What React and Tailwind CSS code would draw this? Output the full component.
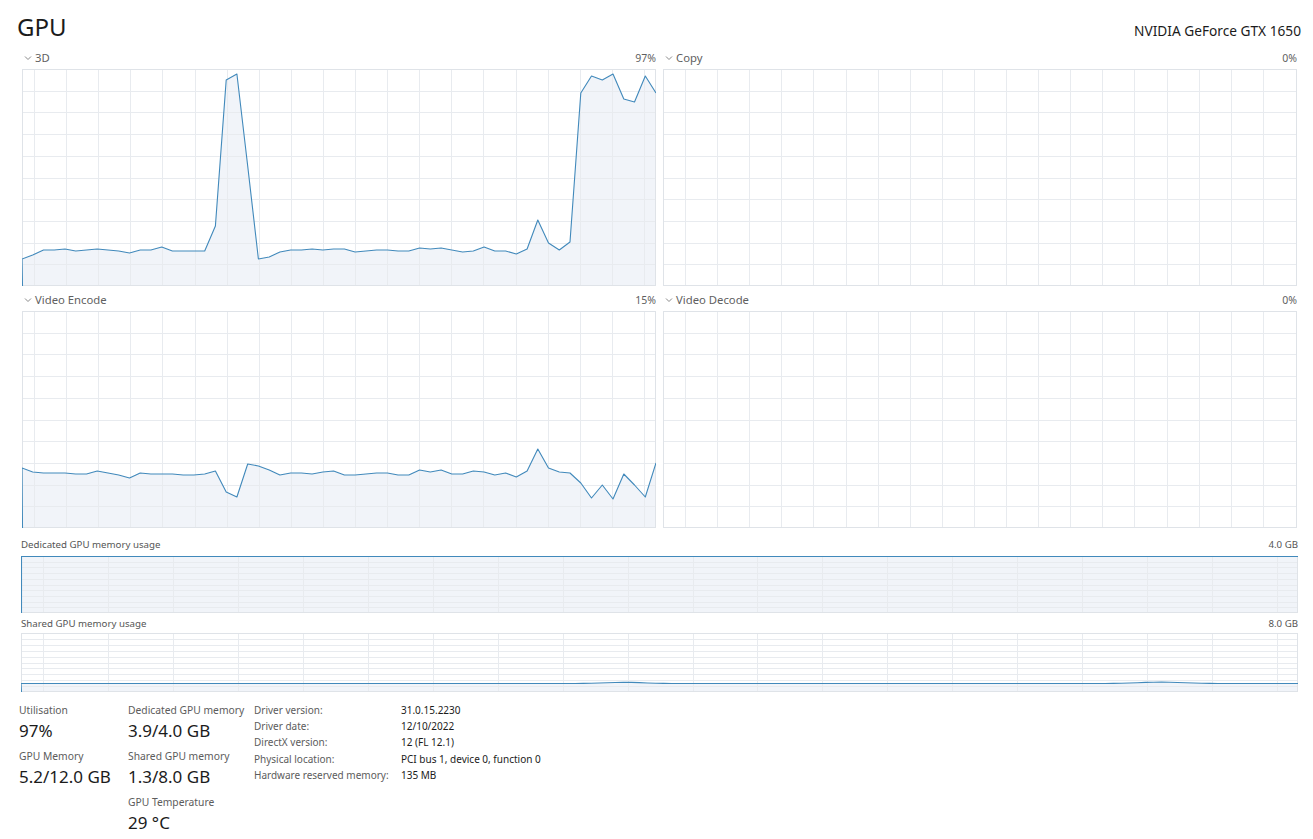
import React from 'react';

// sampled from the reference: y offsets (px) inside a 634x217 graph, 60 samples
const load3d = [
  190, 186, 181, 181, 180, 182, 181, 180, 181, 182,
  184, 181, 181, 178, 182, 182, 182, 182, 157, 11,
  5, 97, 190, 188, 183, 181, 181, 180, 181, 180,
  180, 183, 182, 181, 181, 182, 182, 179, 180, 179,
  181, 183, 182, 178, 182, 182, 185, 180, 151, 174,
  181, 173, 24, 7, 11, 5, 30, 33, 7, 24,
];

const loadEncode = [
  157, 161, 162, 162, 162, 163, 163, 160, 162, 164,
  167, 162, 163, 163, 163, 164, 164, 163, 160, 181,
  186, 153, 155, 159, 164, 162, 162, 163, 161, 160,
  164, 164, 163, 162, 162, 164, 164, 159, 161, 159,
  163, 163, 160, 161, 164, 162, 166, 160, 138, 157,
  161, 162, 172, 187, 174, 188, 163, 174, 186, 152,
];

const LINE = '#4189bb';
const FILL = '#f1f4f9';
const GRID = '#e8ebef';
const BORDER = '#dfe3e8';

const range = (n) => Array.from({ length: n }, (_, i) => i);

function Graph({ w, h, colStart, colStep, cols, rows, points, full }) {
  const step = w / (points ? points.length - 1 : 1);
  let line = '';
  let area = '';
  if (points) {
    const pts = points.map((y, i) => `${(i * step).toFixed(1)},${y}`);
    line = `0.5,${h} ` + pts.join(' ');
    area = `0,${h} ` + pts.join(' ') + ` ${w},${h}`;
  }
  return (
    <svg width={w} height={h} className="block">
      <rect x="0" y="0" width={w} height={h} fill="#fff" />
      {full && <rect x="0" y="0" width={w} height={h} fill={FILL} />}
      {area && <polygon points={area} fill={FILL} />}
      {range(cols).map((k) => {
        const x = Math.round(colStart + k * colStep) + 0.5;
        return <line key={'c' + k} x1={x} x2={x} y1="0" y2={h} stroke={GRID} strokeWidth="1" />;
      })}
      {range(rows - 1).map((k) => {
        const y = Math.round(((k + 1) * h) / rows) + 0.5;
        return <line key={'r' + k} x1="0" x2={w} y1={y} y2={y} stroke={GRID} strokeWidth="1" />;
      })}
      <rect x="0.5" y="0.5" width={w - 1} height={h - 1} fill="none" stroke={BORDER} strokeWidth="1" />
      {line && <polyline points={line} fill="none" stroke={LINE} strokeWidth="1.1" strokeLinejoin="round" />}
      {full && (
        <polyline points={`0.5,${h} 0.5,0.5 ${w},0.5`} fill="none" stroke={LINE} strokeWidth="1.1" />
      )}
    </svg>
  );
}

function Chevron() {
  return (
    <svg width="8" height="6" viewBox="0 0 8 6" className="mr-[3px]">
      <polyline points="1,1.5 4,4.5 7,1.5" fill="none" stroke="#8a8a8a" strokeWidth="1" />
    </svg>
  );
}

function EngineLabel({ name, value }) {
  return (
    <div className="flex items-center justify-between text-[11.3px] leading-[14px] text-[#5f5f5f]">
      <div className="flex items-center pl-[2px]">
        <Chevron />
        <span>{name}</span>
      </div>
      <span className="text-[10.5px]">{value}</span>
    </div>
  );
}

function Engine({ name, value, points, left }) {
  return (
    <div className="flex flex-col">
      <EngineLabel name={name} value={value} />
      <div className="h-[4px]" />
      <Graph
        w={634}
        h={217}
        colStart={left ? 12 : 22}
        colStep={32.1}
        cols={left ? 20 : 19}
        rows={10}
        points={points}
      />
    </div>
  );
}

function Stat({ label, value }) {
  return (
    <div className="flex flex-col">
      <span className="text-[10.3px] leading-[16px] text-[#5c5c5c]">{label}</span>
      <span className="text-[17px] leading-[24px] text-[#1b1b1b] mb-[6px] translate-y-[1px]">{value}</span>
    </div>
  );
}

// shared memory trace: flat with two soft bumps
const shared = (() => {
  const n = 160;
  return range(n).map((i) => {
    const x = (i / (n - 1)) * 1277;
    const b1 = Math.exp(-((x - 604) ** 2) / (2 * 18 ** 2)) * 1.2;
    const b2 = Math.exp(-((x - 1140) ** 2) / (2 * 22 ** 2)) * 1.4;
    return +(50.5 - b1 - b2).toFixed(2);
  });
})();

const driver = [
  ['Driver version:', '31.0.15.2230'],
  ['Driver date:', '12/10/2022'],
  ['DirectX version:', '12 (FL 12.1)'],
  ['Physical location:', 'PCI bus 1, device 0, function 0'],
  ['Hardware reserved memory:', '135 MB'],
];

export default function App() {
  return (
    <div className="w-[1313px] h-[839px] overflow-hidden bg-white pl-[21px] font-['Segoe_UI','Noto_Sans',sans-serif] text-[#1b1b1b]">
      {/* header */}
      <div className="flex items-baseline justify-between w-[1280px] pt-[11px]">
        <span className="text-[24px] leading-[32px] -ml-[4px] text-[#1b1b1b]">GPU</span>
        <span className="text-[13.7px] leading-[20px] text-[#1b1b1b]">NVIDIA GeForce GTX 1650</span>
      </div>

      {/* engines */}
      <div className="ml-[1px] pt-[8px] grid grid-cols-[634px_634px] gap-x-[7px]">
        <Engine name="3D" value="97%" points={load3d} left />
        <Engine name="Copy" value="0%" />
      </div>
      <div className="ml-[1px] pt-[7px] grid grid-cols-[634px_634px] gap-x-[7px]">
        <Engine name="Video Encode" value="15%" points={loadEncode} left />
        <Engine name="Video Decode" value="0%" />
      </div>

      {/* memory */}
      <div className="w-[1277px] pt-[10px]">
        <div className="flex justify-between text-[9.7px] leading-[14px] text-[#555] mb-[4px]">
          <span>Dedicated GPU memory usage</span>
          <span>4.0 GB</span>
        </div>
        <Graph w={1277} h={57} colStart={22} colStep={64.95} cols={20} rows={10} full />
        <div className="flex justify-between text-[9.7px] leading-[14px] text-[#555] mt-[4px] mb-[2px]">
          <span>Shared GPU memory usage</span>
          <span>8.0 GB</span>
        </div>
        <Graph w={1277} h={59} colStart={22} colStep={64.95} cols={20} rows={10} points={shared} />
      </div>

      {/* stats */}
      <div className="flex items-start -ml-[2px] pt-[10px]">
        <div className="w-[109px] flex flex-col">
          <Stat label="Utilisation" value="97%" />
          <Stat label="GPU Memory" value="5.2/12.0 GB" />
        </div>
        <div className="w-[126px] flex flex-col">
          <Stat label="Dedicated GPU memory" value="3.9/4.0 GB" />
          <Stat label="Shared GPU memory" value="1.3/8.0 GB" />
          <Stat label="GPU Temperature" value="29 °C" />
        </div>
        <div className="grid grid-cols-[147px_auto] auto-rows-[16.3px] items-center text-[10px]">
          {driver.map(([k, v]) => (
            <React.Fragment key={k}>
              <span className="text-[#5c5c5c]">{k}</span>
              <span className="text-[#1b1b1b]">{v}</span>
            </React.Fragment>
          ))}
        </div>
      </div>
    </div>
  );
}
